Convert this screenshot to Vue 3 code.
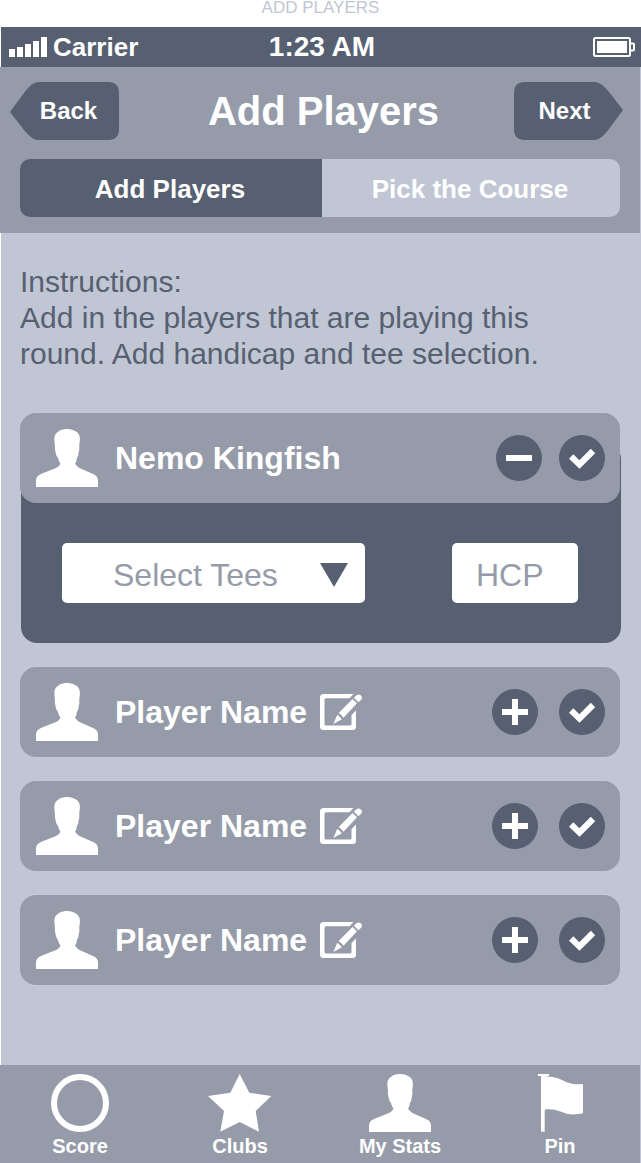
<script setup>
import { ref } from 'vue'

const tees = ref('')
const handicap = ref('')

const players = ref([
  { id: 1, name: 'Nemo Kingfish', open: true, picked: false },
  { id: 2, name: 'Player Name', open: false, picked: false },
  { id: 3, name: 'Player Name', open: false, picked: false },
  { id: 4, name: 'Player Name', open: false, picked: false }
])

const person =
  'M29.500 0 C26 0.300 23.500 1.500 21.500 3.200 C18.500 5 18 9 18.500 12 C18.500 14 18.900 16 19 17.500 C18.600 19 19 21 19.500 22.500 C19.700 25 20.500 27.500 21.800 28.500 C22.500 31 23.200 33 24.500 34.500 C23.500 36.500 22 38 20 39 L5.500 44.800 C2 46.300 0 48.500 0 51.500 V58 H62 V51.500 C62 48.500 60.500 46.500 57 45 L44 39.300 C42 38.300 40.300 36.500 39 34.500 C40.300 33 40.700 31 41 28.500 C42.300 27.500 42.700 25 42.700 23 C43.400 21 43.700 19 43.200 17.500 C43.200 15.500 43.900 13 43.900 10.500 C43.900 7 43 4.500 40.500 2.800 C37.500 0.800 33.500 -0.200 29.500 0 Z'
</script>

<template>
  <div class="page">
    <p class="caption">ADD PLAYERS</p>

    <div class="screen">
      <div class="status">
        <div class="carrier">
          <svg width="38" height="20" viewBox="0 0 38 20" fill="#fff" aria-hidden="true">
            <path d="M0 12h6v8H0zM8 10h6v10H8zM16 7h6v13h-6zM24 4h6v16h-6zM32 0h6v20h-6z" />
          </svg>
          <span>Carrier</span>
        </div>
        <span class="clock">1:23 AM</span>
        <svg class="battery" width="42" height="20" viewBox="0 0 42 20" aria-hidden="true">
          <rect x="1" y="1" width="36" height="18" rx="1.500" fill="none" stroke="#fff" stroke-width="2" />
          <rect x="4" y="4" width="30" height="12" fill="#fff" />
          <path d="M38 6.500h2q1 0 1 1v5q0 1-1 1h-2" fill="none" stroke="#fff" stroke-width="2" />
        </svg>
      </div>

      <header class="header">
        <div class="bar">
          <button type="button" class="arrow back">
            <svg width="109" height="58" viewBox="0 0 109 58" aria-hidden="true">
              <path d="M0 30 L14 11 Q22 0 28 0 H98 Q109 0 109 11 V47 Q109 58 98 58 H28 Q22 58 14 48 Z" fill="#576071" />
            </svg>
            <span>Back</span>
          </button>
          <h1>Add Players</h1>
          <button type="button" class="arrow next">
            <svg width="109" height="58" viewBox="0 0 109 58" aria-hidden="true">
              <path d="M109 28 L95 10 Q87 0 81 0 H11 Q0 0 0 11 V47 Q0 58 11 58 H81 Q87 58 95 47 Z" fill="#576071" />
            </svg>
            <span>Next</span>
          </button>
        </div>
        <nav class="tabs">
          <button type="button" class="tab active">Add Players</button>
          <button type="button" class="tab">Pick the Course</button>
        </nav>
      </header>

      <main class="main">
        <div class="instructions">
          <p>Instructions:</p>
          <p>Add in the players that are playing this round. Add handicap and tee selection.</p>
        </div>

        <ul class="players">
          <li v-for="p in players" :key="p.id">
            <div class="card">
              <svg class="avatar" width="62" height="58" viewBox="0 0 62 58" aria-hidden="true">
                <path :d="person" fill="#fff" />
              </svg>
              <span class="name">{{ p.name }}</span>
              <button v-if="!p.open" type="button" class="edit" aria-label="Edit name">
                <svg width="43" height="36" viewBox="0 0 43 36" fill="#fff" aria-hidden="true">
                  <path d="M3.500 0 H33.500 L29.500 4.300 H6 Q4.500 4.300 4.500 5.800 V30 Q4.500 31.500 6 31.500 H30 Q31.500 31.500 31.500 30 V21 L36 16.500 V32.500 Q36 36 32.500 36 H3.500 Q0 36 0 32.500 V3.500 Q0 0 3.500 0 Z" />
                  <path d="M13.300 30 L17.300 20.800 Q19.500 22.500 21.900 25.300 Z" />
                  <path d="M18.700 19 L32.500 5 L37 9.300 L23.500 23.800 Q21.500 20.800 18.700 19 Z" />
                  <path d="M33.800 3.800 L36.500 1.200 Q38.500 -0.300 40.700 1.200 Q43 3.300 41.300 5.500 L38.500 8.300 Z" />
                </svg>
              </button>
              <div class="actions" :class="{ tight: p.open }">
                <button type="button" class="round" :aria-label="p.open ? 'Collapse player' : 'Expand player'">
                  <svg width="46" height="46" viewBox="0 0 46 46" fill="#fff" aria-hidden="true">
                    <path v-if="p.open" d="M10 20h26v6H10z" />
                    <path v-else d="M20 10h6v10h10v6H26v10h-6V26H10v-6h10z" />
                  </svg>
                </button>
                <label class="round">
                  <input v-model="p.picked" type="checkbox" :aria-label="'Confirm ' + p.name" />
                  <svg width="46" height="46" viewBox="0 0 46 46" fill="#fff" aria-hidden="true">
                    <path d="M10 23.700 L14.300 19.300 L20.300 25.300 L31.800 13.700 L36.200 18.300 L20.500 33.700 Z" />
                  </svg>
                </label>
              </div>
            </div>
            <div v-if="p.open" class="details">
              <div class="tees">
                <select v-model="tees" aria-label="Select Tees">
                  <option value="">Select Tees</option>
                </select>
                <svg width="28" height="24" viewBox="0 0 28 24" aria-hidden="true">
                  <path d="M0 0h28L14 24z" fill="#576071" />
                </svg>
              </div>
              <input v-model="handicap" class="hcp" type="text" placeholder="HCP" aria-label="HCP" />
            </div>
          </li>
        </ul>
      </main>

      <footer class="footer">
        <a href="#score">
          <svg width="58" height="58" viewBox="0 0 58 58" aria-hidden="true">
            <circle cx="29" cy="29" r="26" fill="none" stroke="#fff" stroke-width="6" />
          </svg>
          <span>Score</span>
        </a>
        <a href="#clubs">
          <svg width="64" height="58" viewBox="0 0 64 58" aria-hidden="true">
            <path d="M31.700 0 L41.300 18.800 L63.300 22 L47.700 37 L51 57.800 L31.700 48 L12.300 57.800 L16 37 L0 22 L22.300 18.800 Z" fill="#fff" />
          </svg>
          <span>Clubs</span>
        </a>
        <a href="#stats">
          <svg width="62" height="58" viewBox="0 0 62 58" aria-hidden="true">
            <path :d="person" fill="#fff" />
          </svg>
          <span>My Stats</span>
        </a>
        <a href="#pin">
          <svg width="45" height="58" viewBox="0 0 45 58" fill="#fff" aria-hidden="true">
            <path d="M0 0 H11 V2 L8 2.800 C26 2 25 12 45 10 V39.300 C25 43.500 24 34 8 35.300 Q6.700 35.500 6.700 37 V57.800 H3 V2 H0 Z" />
          </svg>
          <span>Pin</span>
        </a>
      </footer>
    </div>
  </div>
</template>

<style>
body {
  background: #fff;
}
</style>

<style scoped>
.page {
  min-height: 100vh;
  display: flex;
  flex-direction: column;
  font-family: "Liberation Sans", Arial, sans-serif;
  color: #fff;
}
p,
h1,
ul {
  margin: 0;
  padding: 0;
}
svg {
  display: block;
  flex: none;
}
button,
input,
select {
  font-family: inherit;
  margin: 0;
  padding: 0;
  border: 0;
  background: none;
  color: inherit;
}
.caption {
  padding-bottom: 11px;
  font-size: 17px;
  line-height: 16px;
  text-align: center;
  color: #c0c6d4;
}
.screen {
  flex: 1;
  display: flex;
  flex-direction: column;
  border-left: 1px solid #fff;
  background: #c0c6d4;
}
.status {
  height: 40px;
  padding: 0 6px 0 8px;
  display: grid;
  grid-template-columns: 1fr auto 1fr;
  align-items: center;
  background: #576071;
  font-weight: bold;
  font-size: 26px;
}
.carrier {
  display: flex;
  align-items: center;
  gap: 6px;
}
.clock {
  font-size: 28px;
}
.battery {
  justify-self: end;
}
.header {
  margin: 0 1px 0 -1px;
  padding: 15px 0 16px;
  display: flex;
  flex-direction: column;
  gap: 19px;
  background: #959ba9;
}
.bar {
  display: flex;
  align-items: center;
  padding: 0 17px 0 10px;
}
h1 {
  flex: 1;
  padding-left: 14px;
  font-size: 40px;
  line-height: 58px;
  text-align: center;
}
.arrow {
  display: grid;
  align-items: center;
  justify-items: center;
  font-size: 24px;
  font-weight: bold;
}
.arrow > * {
  grid-area: 1 / 1;
}
.back span {
  padding-left: 8px;
}
.next span {
  padding-right: 8px;
}
.tabs {
  display: grid;
  grid-template-columns: 151fr 149fr;
  margin: 0 20px;
  border-radius: 10px;
  overflow: hidden;
}
.tab {
  height: 58px;
  padding: 2px 2px 0 0;
  font-size: 26px;
  font-weight: bold;
  background: #c0c6d4;
}
.tab.active {
  background: #576071;
}
.main {
  flex: 1;
  padding: 31px 21px 40px 19px;
}
.instructions {
  font-size: 30px;
  line-height: 36px;
  color: #576071;
}
.players {
  margin-top: 41px;
  list-style: none;
  display: flex;
  flex-direction: column;
  gap: 24px;
}
.card {
  position: relative;
  z-index: 1;
  height: 90px;
  padding: 0 15px 0 16px;
  display: flex;
  align-items: center;
  border-radius: 16px;
  background: #959ba9;
}
.name {
  margin-left: 17px;
  font-size: 32px;
  font-weight: bold;
}
.edit {
  margin-left: 13px;
}
.actions {
  margin-left: auto;
  display: flex;
  gap: 21px;
}
.actions.tight {
  gap: 17px;
}
.round {
  display: block;
  width: 46px;
  height: 46px;
  position: relative;
  border-radius: 50%;
  background: #576071;
}
.round input {
  position: absolute;
  inset: 0;
  appearance: none;
  border-radius: 50%;
}
.details {
  margin: -60px -1px 0 1px;
  padding: 100px 43px 40px 41px;
  display: flex;
  justify-content: space-between;
  border-radius: 16px;
  background: #576071;
}
.tees {
  position: relative;
  width: 303px;
}
.tees select,
.hcp {
  width: 100%;
  height: 60px;
  box-sizing: border-box;
  border-radius: 5px;
  background: #fff;
  color: #959ba9;
  font-size: 32px;
}
.tees select {
  appearance: none;
  padding: 3px 60px 0 51px;
}
.tees svg {
  position: absolute;
  right: 17px;
  top: 20px;
  pointer-events: none;
}
.hcp {
  width: 126px;
  padding: 4px 20px 0 24px;
}
.hcp::placeholder {
  color: #959ba9;
  opacity: 1;
}
.footer {
  margin: 0 1px 0 -1px;
  padding: 9px 0 7px;
  display: grid;
  grid-template-columns: repeat(4, 1fr);
  background: #959ba9;
}
.footer a {
  display: flex;
  flex-direction: column;
  align-items: center;
  gap: 4px;
  color: #fff;
  font-size: 20px;
  font-weight: bold;
  line-height: 20px;
  text-decoration: none;
}
</style>
